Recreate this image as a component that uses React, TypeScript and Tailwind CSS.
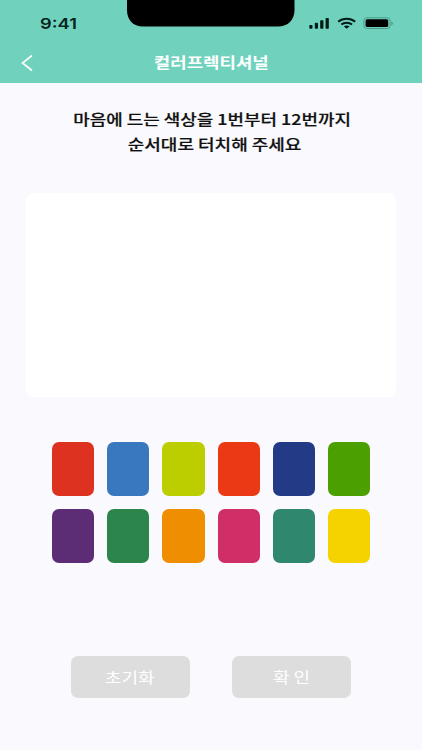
import type { ReactNode } from "react";

const SWATCHES = [
  "bg-[#dd3220]",
  "bg-[#3977be]",
  "bg-[#bccd00]",
  "bg-[#eb3915]",
  "bg-[#233b87]",
  "bg-[#4b9f00]",
  "bg-[#5c2c75]",
  "bg-[#2c864c]",
  "bg-[#ef8e00]",
  "bg-[#d02e66]",
  "bg-[#2f886e]",
  "bg-[#f4d300]",
];

function StatusBar() {
  return (
    <div className="flex h-[46px] items-start justify-between">
      <div className="w-[127px] pt-[14px] pl-[40px] font-['Inter',sans-serif] text-[15px] leading-[20px] font-semibold text-[#06231e]">
        <span className="inline-block origin-left scale-x-[1.22]">9:41</span>
      </div>
      <svg className="h-[27px] w-[168px]" viewBox="0 0 168 27" aria-hidden="true">
        <path d="M0 0V10C0 20 6 26.5 16 26.5H151C161 26.5 167.500 20 167.500 10V0Z" fill="#000" />
      </svg>
      <svg className="mt-[14px] h-[18px] w-[127px]" viewBox="295 14 127 18" aria-hidden="true">
        <g fill="#001c16">
          <rect x="309.300" y="25" width="3.200" height="3.700" rx=".7" />
          <rect x="314.800" y="22.800" width="3.200" height="5.900" rx=".7" />
          <rect x="320.200" y="20.300" width="3.200" height="8.400" rx=".7" />
          <rect x="325.600" y="18" width="3.200" height="10.700" rx=".7" />
        </g>
        <g fill="none" stroke="#001c16" strokeWidth="2">
          <path d="M338.200 21.700C343 17.800 350.400 17.800 355.200 21.700" />
          <path d="M341.300 24.500C344.400 22.100 349 22.100 352.100 24.500" />
        </g>
        <path d="M343.800 26.300C345.500 25.100 347.900 25.100 349.600 26.300L346.700 28.700Z" fill="#001c16" />
        <rect x="363.900" y="17.800" width="26.200" height="10.700" rx="2.800" fill="none" stroke="#4b9a8b" />
        <rect x="365.600" y="19.300" width="22.600" height="7.700" rx="1.500" fill="#000" />
        <path d="M391.500 21.500C393.100 22.200 393.100 24.700 391.500 25.400Z" fill="#3d8376" />
      </svg>
    </div>
  );
}

function ActionButton({ children }: { children: ReactNode }) {
  return (
    <button className="flex h-[42.500px] w-[119px] items-center justify-center rounded-[7px] bg-[#dddddd] text-[15px] leading-[20px] font-normal text-white">
      <span className="inline-block scale-x-[1.2] whitespace-nowrap">{children}</span>
    </button>
  );
}

export default function App() {
  return (
    <div className="flex h-[750px] w-[422px] flex-col overflow-hidden bg-[#f9f9fe] font-['Noto_Sans_CJK_KR',sans-serif]">
      <header className="h-[83px] shrink-0 bg-[#70d2bd]">
        <StatusBar />
        <div className="grid h-[32px] grid-cols-[60px_1fr_60px] items-center">
          <button className="pt-px pl-[21px]" aria-label="뒤로">
            <svg className="h-[18px] w-[13px]" viewBox="0 0 13 18" fill="none" stroke="white" strokeWidth="1.600">
              <path d="M11 1.500L1.500 9L11 16.500" />
            </svg>
          </button>
          <h1 className="text-center text-[15px] leading-[24px] font-bold text-white">
            <span className="inline-block scale-x-[1.19]">컬러프렉티셔널</span>
          </h1>
        </div>
      </header>

      <main className="flex flex-1 flex-col items-center">
        <p className="mt-[23px] pl-[3px] text-center text-[15px] leading-[25px] font-medium text-[#111] [-webkit-text-stroke:0.2px_#111]">
          <span className="block scale-x-[1.195] whitespace-nowrap">마음에 드는 색상을 1번부터 12번까지</span>
          <span className="block scale-x-[1.2] whitespace-nowrap pl-[4px]">순서대로 터치해 주세요</span>
        </p>
        <div className="mt-[37px] h-[204px] w-[370px] rounded-[7px] bg-white" />
        <div className="mt-[44.500px] grid grid-cols-6 gap-x-[13px] gap-y-[13.500px]">
          {SWATCHES.map((color) => (
            <div key={color} className={`h-[54px] w-[42.200px] rounded-[7px] ${color}`} />
          ))}
        </div>
        <div className="mt-[92.500px] flex gap-[42px] pr-px">
          <ActionButton>초기화</ActionButton>
          <ActionButton>확 인</ActionButton>
        </div>
      </main>
    </div>
  );
}
